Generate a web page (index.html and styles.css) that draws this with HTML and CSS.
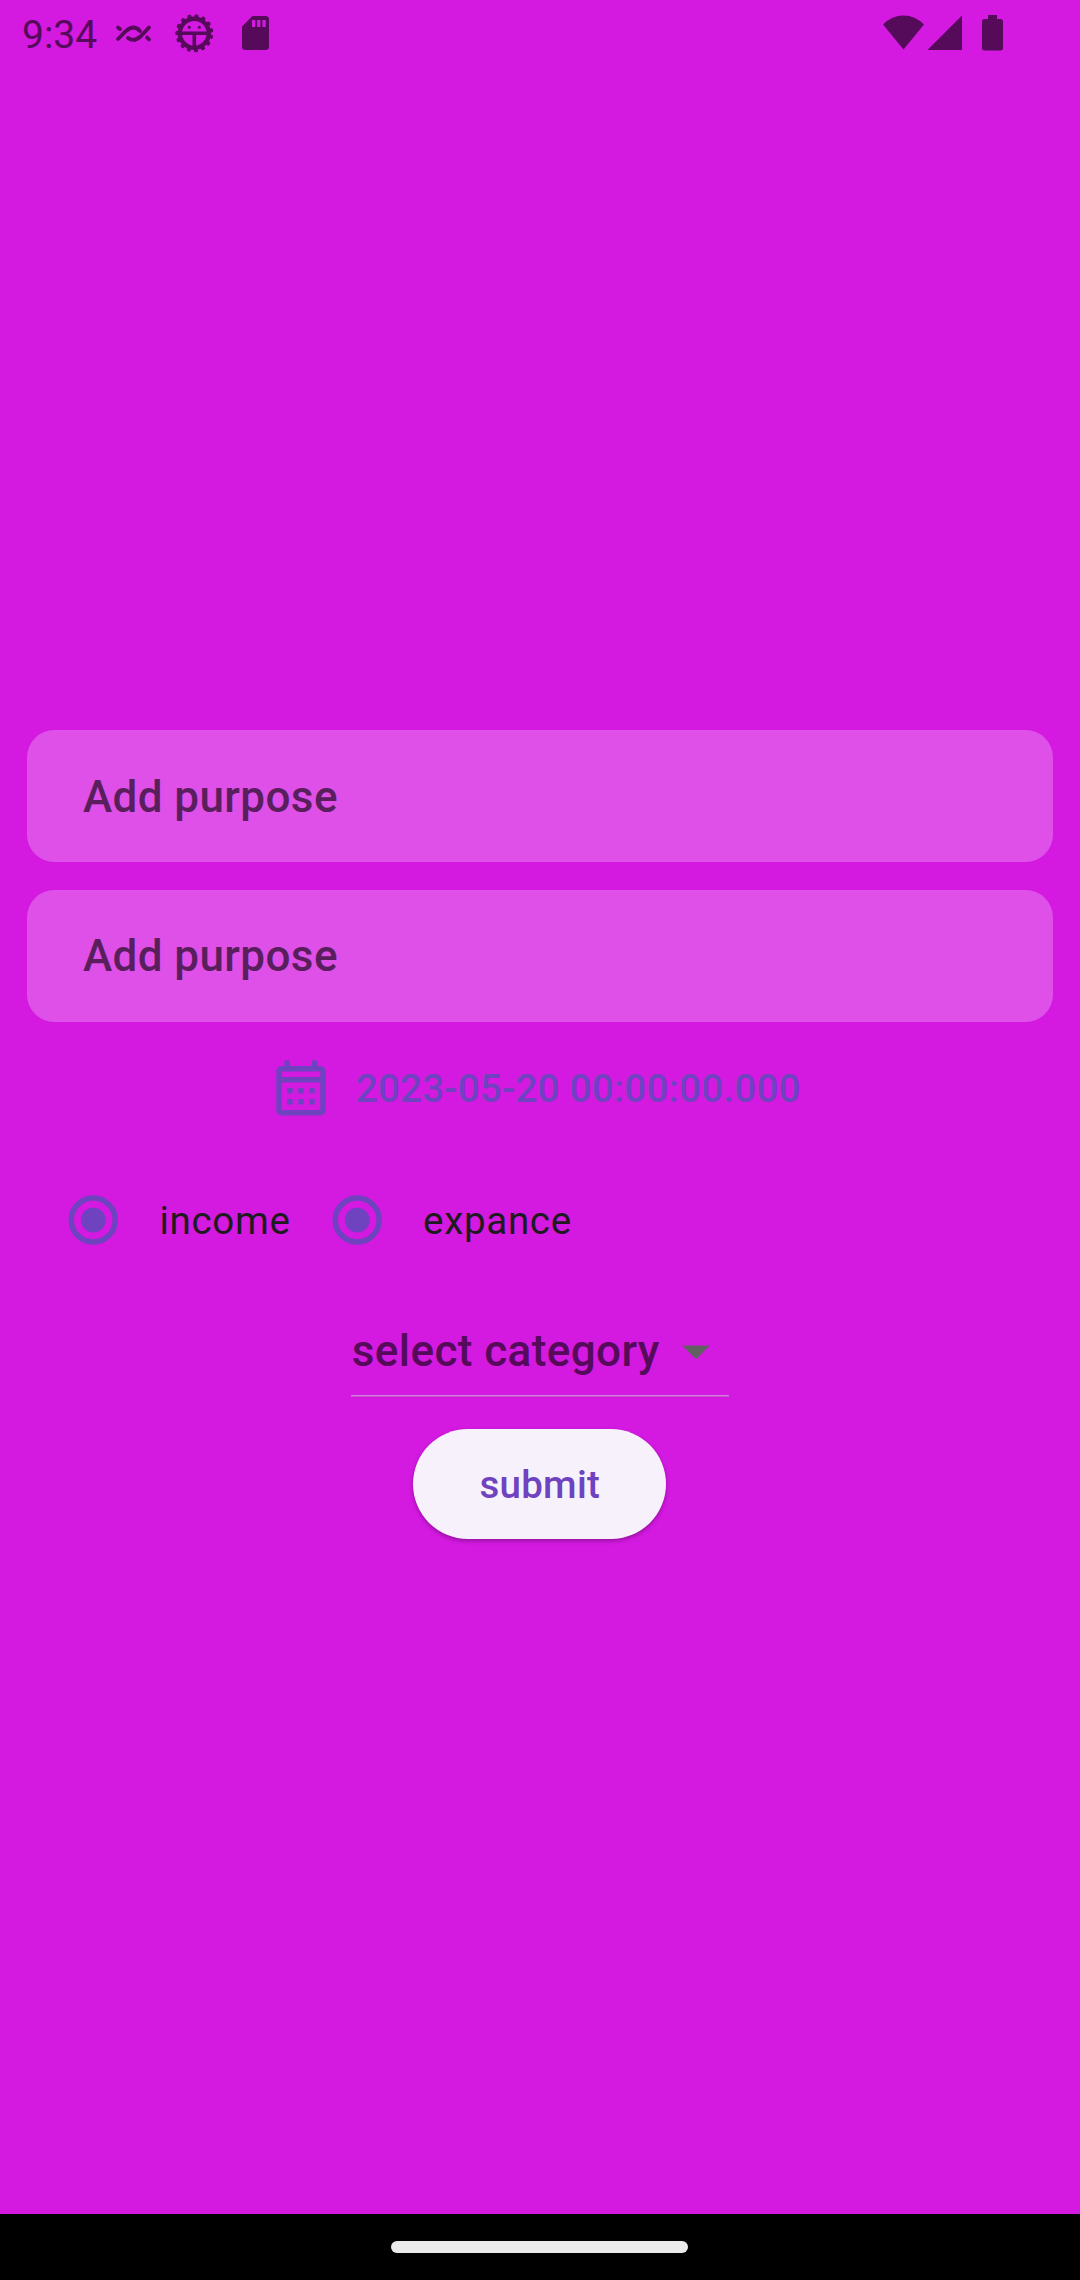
FILE: index.html
```html
<!DOCTYPE html>
<html lang="en">
<head>
<meta charset="utf-8">
<title>Add transaction</title>
<link rel="stylesheet" href="styles.css">
</head>
<body>
<div class="screen">
  <header class="status">
    <span class="clock">9:34</span>
    <svg class="notifications" width="166" height="70" viewBox="110 0 166 70">
      <g fill="none" stroke="currentColor" stroke-width="3.8" stroke-linecap="round">
        <path d="M118 39L126 31Q134 24 140 31M128 38Q134 42.500 141 36L149 27.500M118 27.500L120 29M147 37.500L149 39.500"/>
      </g>
      <g fill="none" stroke="currentColor">
        <circle cx="194.300" cy="33.300" r="14.500" stroke-width="4.400"/>
        <circle cx="194.300" cy="33.300" r="17.300" stroke-width="3.600" stroke-linecap="round" stroke-dasharray="0.700 6.547" stroke-dashoffset="-3.200"/>
        <path d="M180 33.300H209M194.300 34V48" stroke-width="3.600"/>
      </g>
      <circle cx="189.300" cy="27.300" r="1.500" fill="currentColor"/>
      <circle cx="199.300" cy="27.300" r="1.500" fill="currentColor"/>
      <path fill="currentColor" fill-rule="evenodd" d="M252.500 16H265.500Q269 16 269 19.500V46.500Q269 50 265.500 50H245.500Q242 50 242 46.500V26.500ZM252 20V27H255.200V20ZM257.200 20V27H260.400V20ZM262.500 20V27H265.700V20Z"/>
    </svg>
    <svg class="indicators" width="130" height="70" viewBox="876 0 130 70">
      <g fill="currentColor">
        <path d="M883 24.500Q892 15.500 903.500 15.500Q915 15.500 924 24.500L903.500 49.500Z"/>
        <path d="M927.500 50L962 15.500V50Z"/>
        <path d="M988 15H997V19H1000.500Q1003 19 1003 21.500V48Q1003 50.500 1000.500 50.500H984.500Q982 50.500 982 48V21.500Q982 19 984.500 19H988Z"/>
      </g>
    </svg>
  </header>

  <main class="form">
    <div class="field first">Add purpose</div>
    <div class="field">Add purpose</div>

    <div class="date">
      <svg class="icon" viewBox="0 0 24 24"><path fill="currentColor" d="M19 4h-1V2h-2v2H8V2H6v2H5c-1.110 0-1.990.9-1.990 2L3 20c0 1.100.890 2 2 2h14c1.100 0 2-.9 2-2V6c0-1.100-.9-2-2-2zm0 16H5V10h14v10zm0-12H5V6h14v2zM9 14H7v-2h2v2zm4 0h-2v-2h2v2zm4 0h-2v-2h2v2zm-8 4H7v-2h2v2zm4 0h-2v-2h2v2zm4 0h-2v-2h2v2z"/></svg>
      <span class="date-text">2023-05-20 00:00:00.000</span>
    </div>

    <div class="choices">
      <svg class="radio" viewBox="0 0 48 48"><circle class="ring" cx="24" cy="24" r="8"/><circle class="dot" cx="24" cy="24" r="4.500"/></svg>
      <span class="choice">income</span>
      <svg class="radio" viewBox="0 0 48 48"><circle class="ring" cx="24" cy="24" r="8"/><circle class="dot" cx="24" cy="24" r="4.500"/></svg>
      <span class="choice">expance</span>
    </div>

    <div class="dropdown">
      <div class="select">
        <span>select category</span>
        <svg class="icon arrow" viewBox="0 0 24 24"><path fill="currentColor" d="M7 10l5 5 5-5z"/></svg>
      </div>
    </div>

    <button class="submit" type="button">submit</button>
  </main>

  <footer class="nav"><span class="handle"></span></footer>
</div>
</body>
</html>
```
FILE: styles.css
```css
* { box-sizing: border-box; }

body {
  margin: 0;
  font-family: Roboto, sans-serif;
  background: #d419e1;
}

.screen {
  width: 1080px;
  height: 2280px;
  display: flex;
  flex-direction: column;
}

.status {
  height: 70px;
  flex: none;
  display: flex;
  align-items: center;
  padding: 0 74px 0 22px;
  color: #550a5a;
}

.clock {
  width: 88px;
  font-size: 39px;
  line-height: 66px;
}

.indicators { margin-left: auto; }

.form {
  flex: 1;
  display: flex;
  flex-direction: column;
  padding: 660px 27.5px 0 27px;
}

.field {
  height: 132px;
  padding-left: 56px;
  border-radius: 27.5px;
  background: rgba(255, 255, 255, .24);
  color: #591f5d;
  font-size: 44px;
  font-weight: 500;
  letter-spacing: .41px;
  line-height: 132px;
}

.first {
  margin-bottom: 27.5px;
  line-height: 134px;
}

.date {
  height: 132px;
  display: flex;
  align-items: center;
  justify-content: center;
  gap: 22px;
  padding-right: 11px;
  color: #6f43c0;
  font-size: 38.5px;
  font-weight: 500;
  letter-spacing: .275px;
}

.date-text { padding-top: 2px; }

.icon {
  width: 66px;
  height: 66px;
  flex: none;
}

.choices {
  height: 132px;
  display: flex;
  align-items: center;
}

.radio {
  width: 132.5px;
  height: 132px;
  flex: none;
}

.ring {
  fill: none;
  stroke: #6f43c0;
  stroke-width: 2;
}

.dot { fill: #6f43c0; }

.choice {
  padding-top: 2px;
  color: #1d1b1e;
  font-size: 38.5px;
  letter-spacing: .69px;
}

.dropdown {
  height: 132px;
  display: flex;
  justify-content: center;
}

.select {
  width: 378px;
  height: 110px;
  padding: 22px 0 0 1px;
  display: flex;
  align-items: center;
  justify-content: space-between;
  border-bottom: 1px solid #d282d8;
  box-shadow: 0 1px #c84fd0;
  color: #550a5a;
  font-size: 44px;
  font-weight: 500;
  letter-spacing: .41px;
}

.arrow { color: #616161; }

.submit {
  align-self: center;
  width: 253px;
  height: 110px;
  margin-top: 11px;
  padding-top: 3px;
  border: 0;
  border-radius: 55px;
  background: #f7f1fc;
  box-shadow: 0 2px 4px rgba(0, 0, 0, .3);
  color: #6f43c0;
  font: 500 38.5px Roboto, sans-serif;
  letter-spacing: .275px;
}

.nav {
  height: 66px;
  flex: none;
  display: flex;
  justify-content: center;
  padding: 27px 1px 0 0;
  background: #000;
}

.handle {
  width: 297px;
  height: 11.5px;
  border-radius: 6px;
  background: #ebebeb;
}
```
